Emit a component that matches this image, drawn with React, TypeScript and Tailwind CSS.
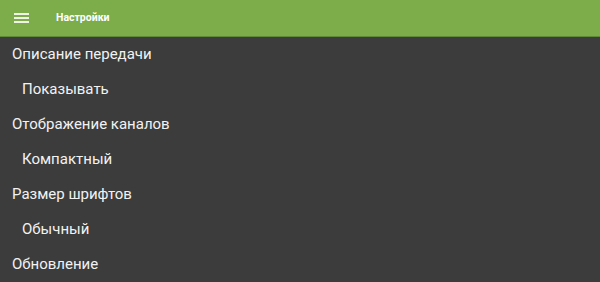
import React from "react";

const rows = [
  { text: "Описание передачи", sub: false },
  { text: "Показывать", sub: true },
  { text: "Отображение каналов", sub: false },
  { text: "Компактный", sub: true },
  { text: "Размер шрифтов", sub: false },
  { text: "Обычный", sub: true },
  { text: "Обновление", sub: false },
];

export default function App() {
  return (
    <div
      className="w-[600px] h-[282px] overflow-hidden bg-[#3c3c3c] text-white"
      style={{ fontFamily: "Roboto, 'Noto Sans', sans-serif" }}
    >
      <header className="flex items-center h-[37px] bg-[#7cad4a] border-b border-[#5f8a38]">
        <div className="flex flex-col gap-[2.5px] ml-[14px] w-[15px]">
          <span className="block h-[1.7px] bg-[#eef5e6]" />
          <span className="block h-[1.7px] bg-[#eef5e6]" />
          <span className="block h-[1.7px] bg-[#eef5e6]" />
        </div>
        <h1 className="ml-[27px] text-[10.5px] font-bold text-white">Настройки</h1>
      </header>
      <div className="flex flex-col">
        {rows.map((r) => (
          <div
            key={r.text}
            className={`h-[35px] flex items-center text-[15px] text-[#f2f2f2] ${
              r.sub ? "pl-[22px]" : "pl-[12px]"
            }`}
          >
            {r.text}
          </div>
        ))}
      </div>
    </div>
  );
}
